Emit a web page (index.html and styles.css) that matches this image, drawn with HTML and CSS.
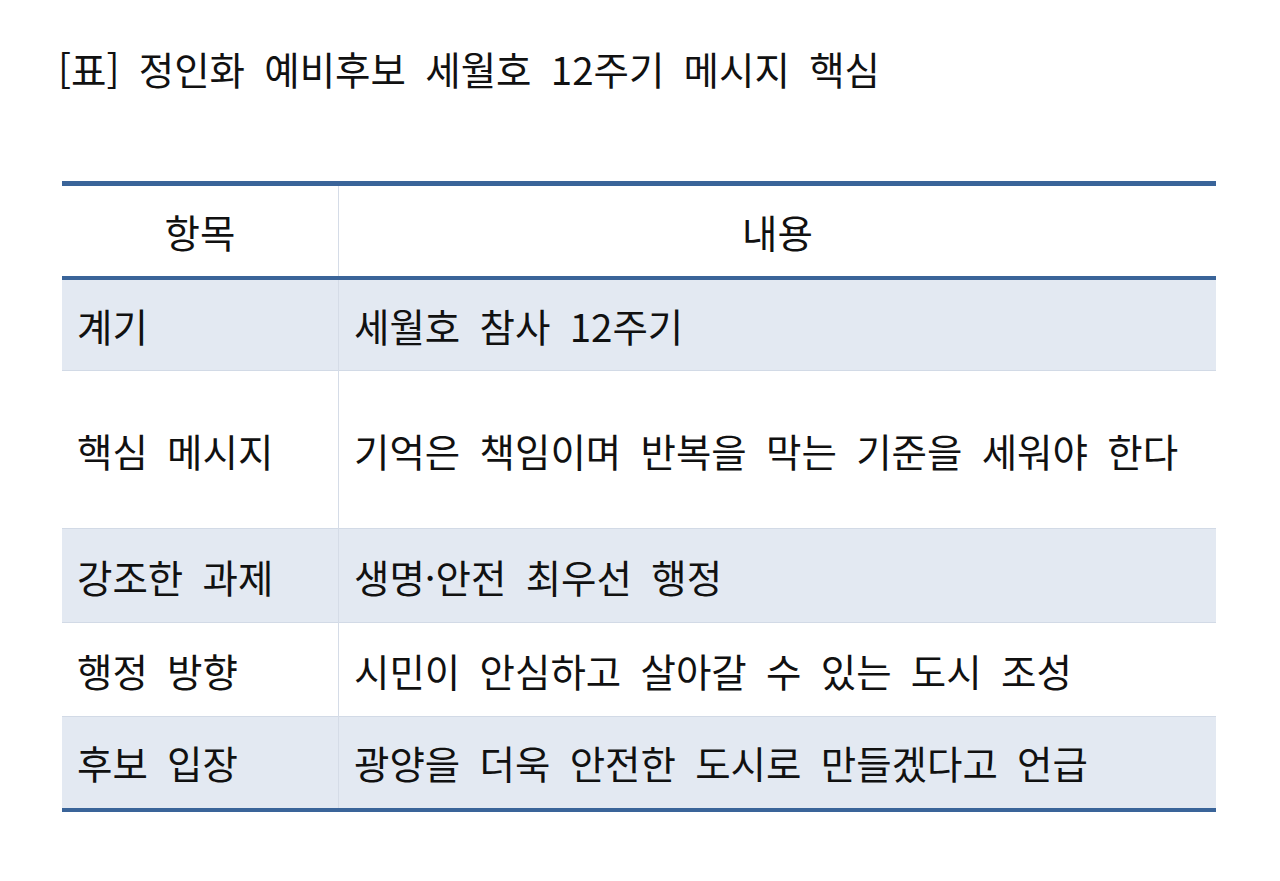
FILE: index.html
```html
<!DOCTYPE html>
<html lang="ko">
<head>
<meta charset="utf-8">
<title>정인화 예비후보 세월호 12주기 메시지 핵심</title>
<link rel="stylesheet" href="styles.css">
</head>
<body>
<main class="page">
  <h1 class="title">[표] 정인화 예비후보 세월호 12주기 메시지 핵심</h1>
  <table class="summary">
    <thead>
      <tr class="head-row">
        <th class="col-key">항목</th>
        <th class="col-val">내용</th>
      </tr>
    </thead>
    <tbody>
      <tr class="row shaded r1">
        <td class="key">계기</td>
        <td class="val">세월호 참사 12주기</td>
      </tr>
      <tr class="row tall">
        <td class="key">핵심 메시지</td>
        <td class="val">기억은 책임이며 반복을 막는 기준을 세워야 한다</td>
      </tr>
      <tr class="row shaded">
        <td class="key">강조한 과제</td>
        <td class="val">생명·안전 최우선 행정</td>
      </tr>
      <tr class="row">
        <td class="key">행정 방향</td>
        <td class="val">시민이 안심하고 살아갈 수 있는 도시 조성</td>
      </tr>
      <tr class="row shaded last">
        <td class="key">후보 입장</td>
        <td class="val">광양을 더욱 안전한 도시로 만들겠다고 언급</td>
      </tr>
    </tbody>
  </table>
</main>
</body>
</html>
```
FILE: styles.css
```css
html, body {
  margin: 0;
  padding: 0;
  background: #ffffff;
}

body {
  font-family: "Noto Sans CJK KR", "Noto Sans", sans-serif;
  color: #111111;
}

.page {
  padding: 42px 64px 0 62px;
}

.title {
  margin: 0 0 0 -4px;
  font-size: 38.5px;
  font-weight: 400;
  line-height: 52px;
  word-spacing: 8.5px;
  color: #111111;
}

.summary {
  margin-top: 87px;
  width: 1154px;
  border-collapse: collapse;
  font-size: 38.5px;
  word-spacing: 8.5px;
}

.summary th,
.summary td {
  padding: 0 15px;
  font-weight: 400;
  line-height: 42px;
  vertical-align: middle;
}

.head-row {
  border-top: 5px solid #3a6499;
  border-bottom: 4px solid #3a6499;
  height: 94px;
}

.summary th {
  text-align: center;
}

.col-key {
  width: 246px;
  border-right: 1px solid #d5dce7;
}

.row {
  height: 94px;
  border-bottom: 1px solid #d2dae6;
}

.row.r1,
.row.last {
  height: 93px;
}

.row.tall {
  height: 158px;
}

.row.shaded {
  background: #e3e9f2;
}

.row.last {
  border-bottom: 4px solid #3a6499;
}

.key {
  border-right: 1px solid #d5dce7;
  white-space: nowrap;
}

.val {
  white-space: nowrap;
}
```
